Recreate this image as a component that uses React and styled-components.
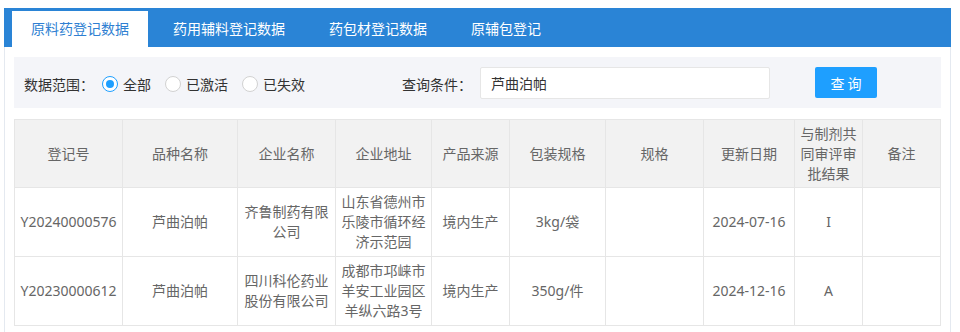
import { useState } from "react";
import styled, { createGlobalStyle } from "styled-components";

const GlobalStyle = createGlobalStyle`
  body {
    margin: 0;
    background: #fff;
    font-family: "Noto Sans", "Noto Sans CJK SC", sans-serif;
    font-size: 14px;
  }
`;

const tabs = ["原料药登记数据", "药用辅料登记数据", "药包材登记数据", "原辅包登记"];
const scopes = ["全部", "已激活", "已失效"];

const columns = [
  { title: "登记号", width: 108 },
  { title: "品种名称", width: 115 },
  { title: "企业名称", width: 98 },
  { title: "企业地址", width: 96 },
  { title: "产品来源", width: 78 },
  { title: "包装规格", width: 96 },
  { title: "规格", width: 98 },
  { title: "更新日期", width: 91 },
  { title: "与制剂共同审评审批结果", width: 68 },
  { title: "备注", width: 78 },
];

const rows = [
  ["Y20240000576", "芦曲泊帕", "齐鲁制药有限公司", "山东省德州市乐陵市循环经济示范园", "境内生产", "3kg/袋", "", "2024-07-16", "I", ""],
  ["Y20230000612", "芦曲泊帕", "四川科伦药业股份有限公司", "成都市邛崃市羊安工业园区羊纵六路3号", "境内生产", "350g/件", "", "2024-12-16", "A", ""],
];

function App() {
  const [active, setActive] = useState(0);
  const [scope, setScope] = useState(0);
  const [keyword, setKeyword] = useState("芦曲泊帕");

  return (
    <>
      <GlobalStyle />
      <Panel>
        <TabBar>
          {tabs.map((t, i) => (
            <Tab key={t} $active={i === active} onClick={() => setActive(i)}>
              {t}
            </Tab>
          ))}
        </TabBar>
        <Body>
          <Filter>
            <Label>数据范围：</Label>
            {scopes.map((s, i) => (
              <RadioItem key={s} onClick={() => setScope(i)}>
                <Radio $checked={i === scope} />
                {s}
              </RadioItem>
            ))}
            <Label $gap>查询条件：</Label>
            <Input value={keyword} onChange={(e) => setKeyword(e.target.value)} />
            <Button>查询</Button>
          </Filter>
          <Table>
            <colgroup>
              {columns.map((c) => (
                <col key={c.title} style={{ width: c.width }} />
              ))}
            </colgroup>
            <thead>
              <tr>
                {columns.map((c) => (
                  <Th key={c.title}>{c.title}</Th>
                ))}
              </tr>
            </thead>
            <tbody>
              {rows.map((r) => (
                <tr key={r[0]}>
                  {r.map((v, i) => (
                    <Td key={i}>{v}</Td>
                  ))}
                </tr>
              ))}
            </tbody>
          </Table>
        </Body>
      </Panel>
    </>
  );
}

const Panel = styled.div`
  width: 947px;
  height: 324px;
  margin: 8px 0 0 4px;
  box-sizing: border-box;
  border-left: 1px solid #e4e9f0;
  border-right: 1px solid #e4e9f0;
`;

const TabBar = styled.div`
  display: flex;
  align-items: flex-end;
  gap: 6px;
  height: 39px;
  margin: 0 -1px;
  padding-left: 8px;
  background: #2a84d6;
`;

const Tab = styled.div`
  height: 36px;
  line-height: 36px;
  padding: 0 19px;
  color: ${(p) => (p.$active ? "#2f7fd2" : "#fff")};
  background: ${(p) => (p.$active ? "#fff" : "transparent")};
  cursor: pointer;
`;

const Body = styled.div`
  padding: 10px 9px 0;
`;

const Filter = styled.div`
  display: flex;
  align-items: center;
  height: 51px;
  padding-left: 10px;
  background: #f4f5f9;
  color: #333;
`;

const Label = styled.span`
  margin-left: ${(p) => (p.$gap ? "83px" : "0")};
  margin-right: 8px;
  padding-top: 2px;
`;

const RadioItem = styled.label`
  display: flex;
  align-items: center;
  gap: 5px;
  margin-right: 14px;
  padding-top: 2px;
  cursor: pointer;
`;

const Radio = styled.span`
  position: relative;
  width: 16px;
  height: 16px;
  box-sizing: border-box;
  border-radius: 50%;
  border: 1px solid ${(p) => (p.$checked ? "#1e9fff" : "#d2d2d2")};
  background: #fff;

  &::after {
    content: "";
    display: ${(p) => (p.$checked ? "block" : "none")};
    position: absolute;
    left: 3px;
    top: 3px;
    width: 8px;
    height: 8px;
    border-radius: 50%;
    background: #1e9fff;
  }
`;

const Input = styled.input`
  width: 290px;
  height: 32px;
  box-sizing: border-box;
  padding: 0 10px;
  border: 1px solid #e6e6e6;
  border-radius: 2px;
  font: inherit;
  color: #333;
  outline: none;
`;

const Button = styled.button`
  width: 62px;
  height: 31px;
  margin-left: 45px;
  padding: 0 0 0 3px;
  border: none;
  border-radius: 2px;
  background: #1e9fff;
  color: #fff;
  font: inherit;
  letter-spacing: 3px;
  cursor: pointer;
`;

const Table = styled.table`
  width: 926px;
  margin-top: 11px;
  table-layout: fixed;
  border-collapse: collapse;
  color: #666;
`;

const Th = styled.th`
  height: 67px;
  padding: 0 5px;
  border: 1px solid #e6e6e6;
  background: #f2f2f2;
  font-weight: normal;
  line-height: 20px;
`;

const Td = styled.td`
  height: 68px;
  padding: 0 5px;
  border: 1px solid #e6e6e6;
  text-align: center;
  line-height: 20px;
`;

export default App;
